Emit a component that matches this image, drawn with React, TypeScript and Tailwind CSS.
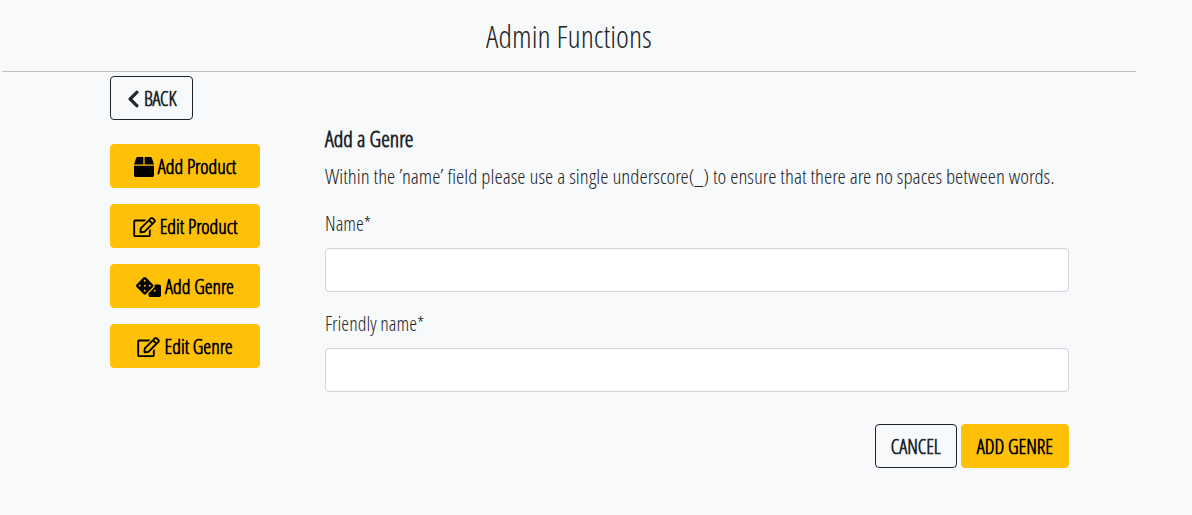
import type { ReactNode } from "react";
import { FaBox, FaChevronLeft, FaDice, FaRegEdit } from "react-icons/fa";

const base =
  "inline-flex h-11 cursor-pointer items-center justify-center gap-1 rounded border pt-0.5 font-bold whitespace-nowrap";
const outline = `${base} border-[#212529] text-[#212529]`;
const solid = `${base} border-[#ffc107] bg-[#ffc107] px-[15px] text-black`;

function AdminLink({ icon, children }: { icon: ReactNode; children: ReactNode }) {
  return (
    <a href="#" className={solid}>
      {icon}
      {children}
    </a>
  );
}

function Field({ id, label }: { id: string; label: string }) {
  return (
    <div className="mb-4">
      <label htmlFor={id} className="mb-2 block leading-8">
        {label}
      </label>
      <input
        id={id}
        name={id}
        type="text"
        required
        className="block h-11 w-full rounded border border-[#ced4da] bg-white px-3 outline-none focus:border-[#80bdff]"
      />
    </div>
  );
}

export default function App() {
  return (
    <div className="min-h-screen bg-[#f8f9fa] pr-14 pl-0.5 font-['Open_Sans_Condensed_Light','Open_Sans_Condensed',sans-serif] text-[20px] leading-[30px] text-[#212529]">
      <header className="border-b border-[#bfc0c1] pt-4 pb-[15px] text-center">
        <h1 className="text-[31px] leading-10">Admin Functions</h1>
      </header>
      <main className="flex pt-1 pr-[67px] pl-[108px]">
        <nav className="flex w-[150px] shrink-0 flex-col gap-4">
          <a href="#" className={`${outline} mb-2 self-start px-4`}>
            <FaChevronLeft className="h-5 w-[13px]" />
            BACK
          </a>
          <AdminLink icon={<FaBox />}>Add Product</AdminLink>
          <AdminLink icon={<FaRegEdit className="h-5 w-[23px]" />}>Edit Product</AdminLink>
          <AdminLink icon={<FaDice className="h-5 w-[25px]" />}>Add Genre</AdminLink>
          <AdminLink icon={<FaRegEdit className="h-5 w-[23px]" />}>Edit Genre</AdminLink>
        </nav>
        <form className="ml-[65px] min-w-0 flex-1 pt-12" onSubmit={(e) => e.preventDefault()}>
          <h2 className="mb-2 text-[22px] leading-7 font-bold">Add a Genre</h2>
          <p className="mb-4 text-[21px] leading-8">
            Within the ’name’ field please use a single underscore(_) to ensure that there are no spaces between words.
          </p>
          <Field id="name" label="Name*" />
          <Field id="friendly_name" label="Friendly name*" />
          <div className="mt-8 flex justify-end gap-1">
            <a href="#" className={`${outline} px-[15px]`}>
              CANCEL
            </a>
            <button type="submit" className={solid}>
              ADD GENRE
            </button>
          </div>
        </form>
      </main>
    </div>
  );
}
